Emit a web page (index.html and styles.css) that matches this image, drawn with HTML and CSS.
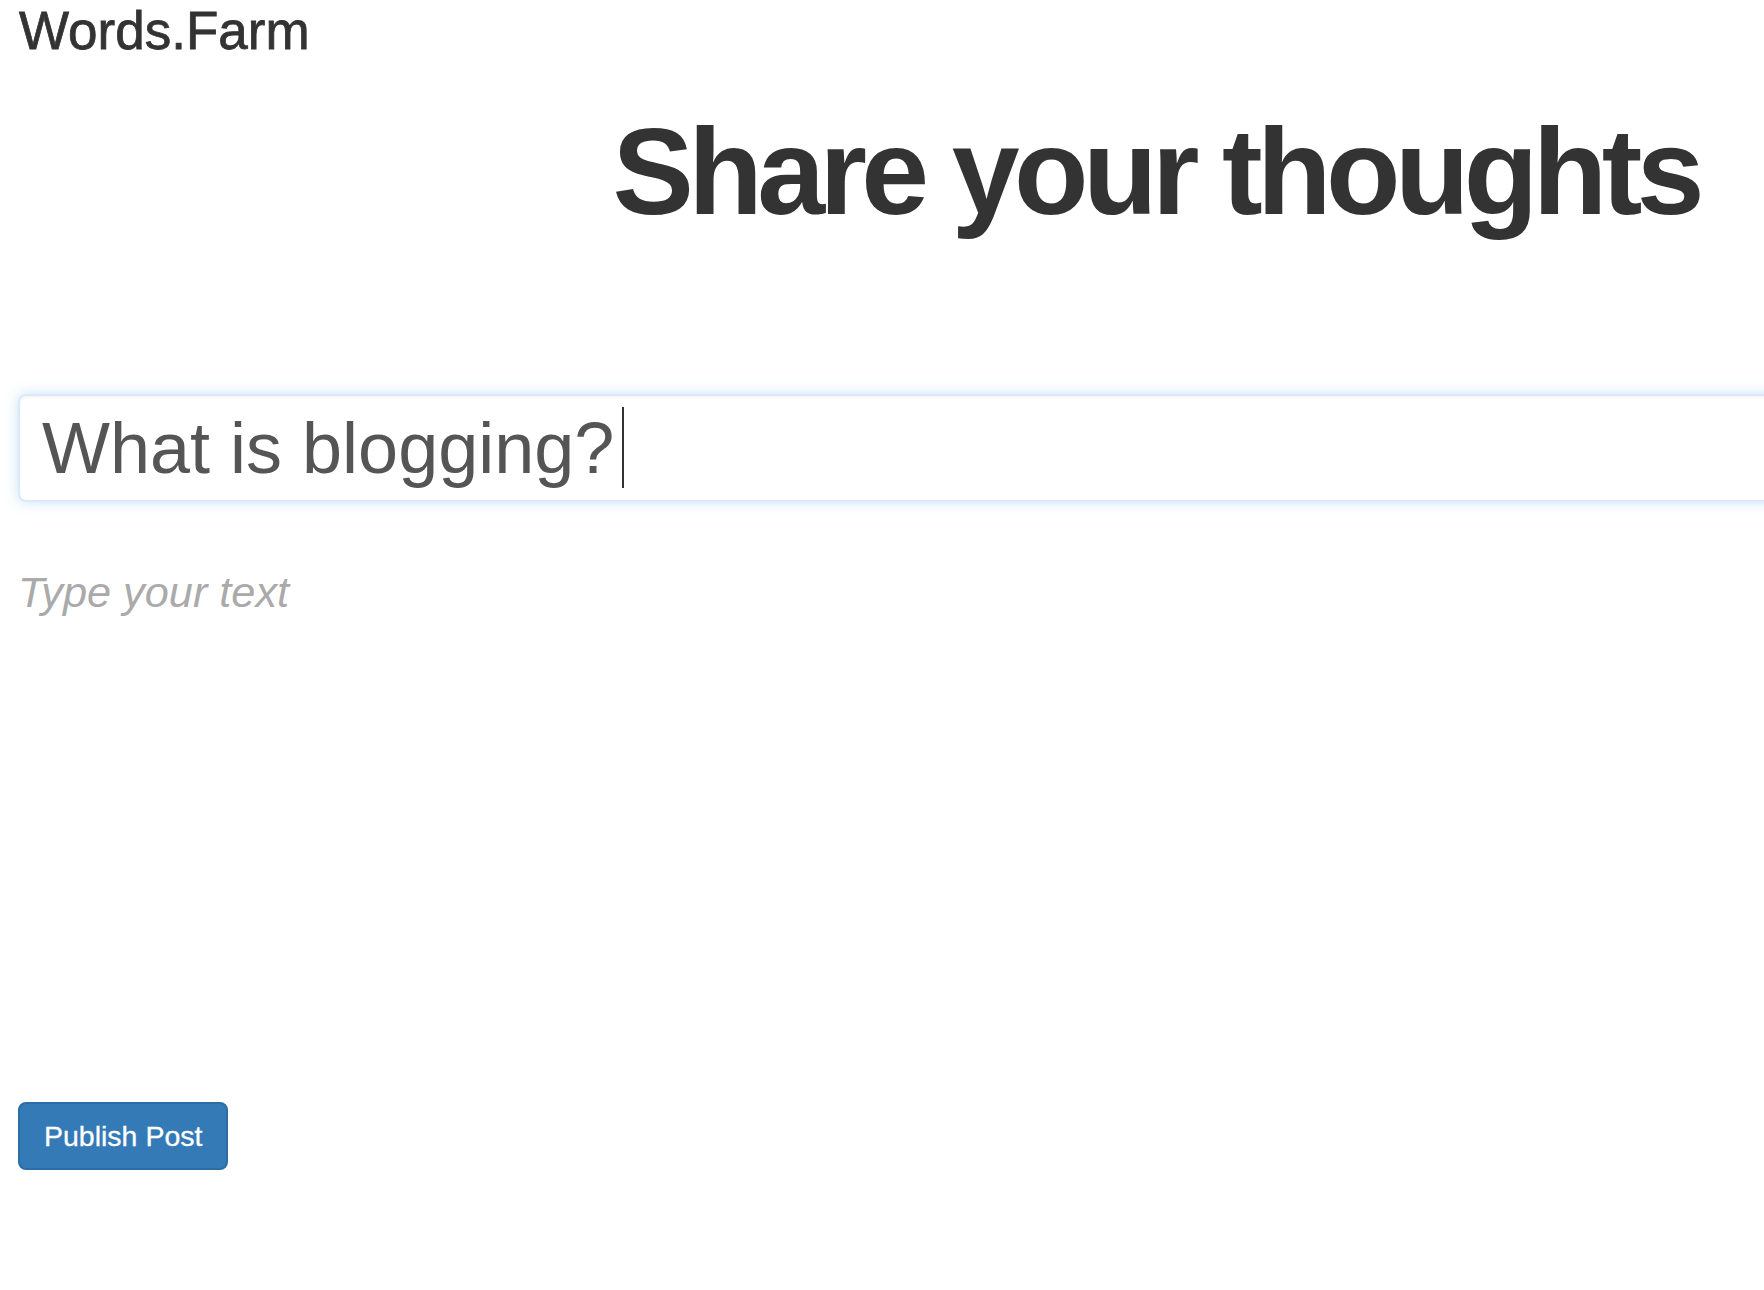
FILE: index.html
```html
<!DOCTYPE html>
<html lang="en">
<head>
    <meta charset="UTF-8">
    <meta name="viewport" content="width=device-width, initial-scale=1.0">
    <title>Words.Farm</title>
    <link rel="stylesheet" href="styles.css">
</head>
<body>
    <div class="page">
        <div class="brand">Words.Farm</div>
        <h1 class="title">Share your thoughts</h1>

        <form class="post-form">
            <div class="title-wrap">
                <input type="text" class="post-title" id="postTitle" value="What is blogging?">
                <span class="caret" aria-hidden="true"></span>
            </div>
            <textarea class="post-body" id="postBody" placeholder="Type your text"></textarea>
            <button type="button" class="btn-publish">Publish Post</button>
        </form>
    </div>
</body>
</html>
```

FILE: styles.css
```css
html {
    overflow-x: hidden;
}

body {
    margin: 0;
    background: #fff;
    color: #333;
    font-family: "Liberation Sans", Arial, Helvetica, sans-serif;
}

.page {
    padding-left: 18px;
}

.brand {
    font-size: 53px;
    line-height: 61px;
    margin-left: 1px;
    -webkit-text-stroke: 0.8px #333;
}

.title {
    margin: 44px 0 0;
    padding-right: 65px;
    font-size: 122px;
    line-height: 134px;
    font-weight: bold;
    letter-spacing: -5.6px;
    text-align: right;
}

.post-form {
    display: flex;
    flex-direction: column;
    align-items: flex-start;
}

.title-wrap {
    position: relative;
    width: calc(100% + 80px);
    margin-top: 155px;
}

.post-title {
    display: block;
    box-sizing: border-box;
    width: 100%;
    height: 108px;
    padding: 0 22px;
    border: 2px solid #dbeaf8;
    border-radius: 8px;
    outline: 0;
    box-shadow: inset 0 2px 2px rgba(0, 0, 0, .04), 0 0 14px rgba(102, 175, 233, .35);
    font-family: inherit;
    font-size: 72px;
    color: #555;
}

.caret {
    position: absolute;
    left: 604px;
    top: 13px;
    width: 2px;
    height: 81px;
    background: #333;
}

.post-body {
    display: block;
    box-sizing: border-box;
    width: 100%;
    height: 500px;
    margin-top: 60px;
    padding: 0;
    border: 0;
    outline: 0;
    resize: none;
    font-family: inherit;
    font-size: 43.3px;
    line-height: 60px;
    color: #333;
}

.post-body::placeholder {
    color: #aaa;
    font-style: italic;
}

.btn-publish {
    margin-top: 40px;
    padding: 12px 24px;
    border: 2px solid #2e6da4;
    border-radius: 8px;
    background-color: #337ab7;
    color: #fff;
    font-family: inherit;
    font-size: 28.5px;
    line-height: 40px;
    -webkit-text-stroke: 0.3px #fff;
    cursor: pointer;
}
```
